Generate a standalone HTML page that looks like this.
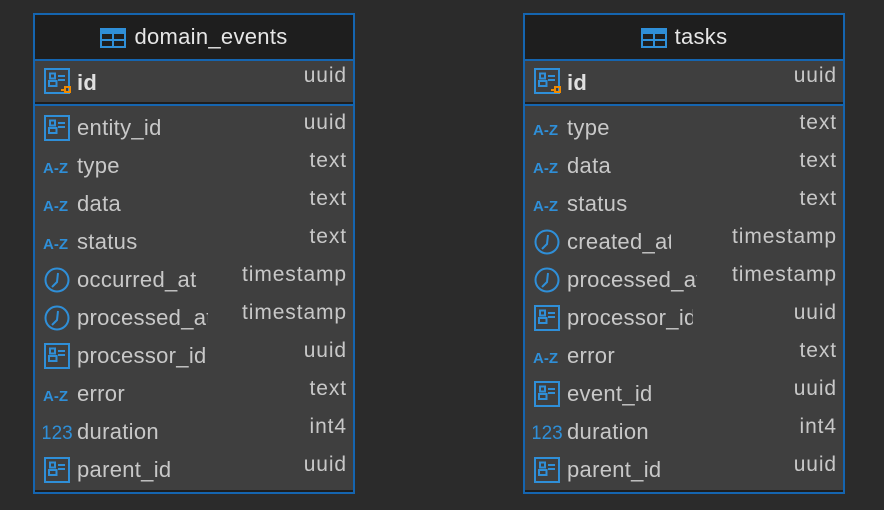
<!DOCTYPE html>
<html><head><style>
body{margin:0;width:884px;height:510px;background:#2b2b2b;overflow:hidden;font-family:"Liberation Sans",sans-serif;position:relative}
.t{position:absolute;top:13px;width:318px;height:477px;border:2px solid #1565b0;background:#3f3f3f}
.h{position:absolute;left:0;top:0;width:318px;height:44px;background:#1e1e1e;border-bottom:2px solid #1565b0;color:#e6e6e6;font-size:22px;letter-spacing:0.3px;line-height:44px;text-align:center}
.h svg{vertical-align:-4px;margin-right:8px}
.sep{position:absolute;left:0;width:318px;top:87px;height:2px;background:#1e1e1e;border-bottom:2px solid #1565b0}
.bot{position:absolute;left:0;bottom:0;width:318px;height:2px;background:#1e1e1e}
.r{position:absolute;left:0;width:318px;height:38px}
.r svg{position:absolute;left:8px;top:6px}
.n{position:absolute;left:42px;top:7px;font-size:22px;letter-spacing:0.3px;color:#c8c8c8;white-space:nowrap;overflow:hidden;line-height:26px}
.ty{position:absolute;right:6px;top:2px;font-size:21px;letter-spacing:0.9px;color:#c8c8c8;line-height:26px}
.b{font-weight:bold;color:#e0e0e0}
</style></head><body>
<svg width="0" height="0" style="position:absolute">
<defs>
<symbol id="card" viewBox="0 0 26 26"><rect x="1" y="1" width="24" height="24" fill="none" stroke="#2f8fd8" stroke-width="2"/><rect x="6" y="5.5" width="5" height="5" fill="none" stroke="#2f8fd8" stroke-width="2"/><rect x="5" y="13" width="7.5" height="5" fill="none" stroke="#2f8fd8" stroke-width="2"/><rect x="14" y="7" width="7" height="2" fill="#2f8fd8"/><rect x="14" y="11" width="7" height="2" fill="#2f8fd8"/></symbol>
<symbol id="clock" viewBox="0 0 26 26"><circle cx="13" cy="13" r="11.5" fill="none" stroke="#2f8fd8" stroke-width="2"/><path d="M14 6 L13 15 L8 20" fill="none" stroke="#2f8fd8" stroke-width="2"/></symbol>
</defs></svg>

<div class="t" style="left:33px">
<div class="h"><svg width="26" height="20"><rect x="1" y="1" width="24" height="18" fill="none" stroke="#2f8fd8" stroke-width="2"/><rect x="1" y="1" width="24" height="5" fill="#2f8fd8"/><rect x="12" y="1" width="2" height="18" fill="#2f8fd8"/><rect x="1" y="11" width="24" height="2" fill="#2f8fd8"/></svg>domain_events</div>
<div class="r" style="top:46px"><svg width="28" height="30"><use href="#card" width="26" height="26" x="1" y="1"/><path d="M18 23h4" stroke="#f08a00" stroke-width="2"/><rect x="22" y="20" width="5" height="5" fill="none" stroke="#f08a00" stroke-width="2"/></svg><div class="n b" style="top:9px">id</div><div class="ty">uuid</div></div>
<div class="sep"></div>
<div class="r" style="top:93px"><svg width="28" height="28"><use href="#card" width="26" height="26" x="1" y="1"/></svg><div class="n">entity_id</div><div class="ty">uuid</div></div>
<div class="r" style="top:131px"><svg width="30" height="28"><text x="0" y="21" font-size="15" font-weight="bold" fill="#2f8fd8" font-family="Liberation Sans">A-Z</text></svg><div class="n">type</div><div class="ty">text</div></div>
<div class="r" style="top:169px"><svg width="30" height="28"><text x="0" y="21" font-size="15" font-weight="bold" fill="#2f8fd8" font-family="Liberation Sans">A-Z</text></svg><div class="n">data</div><div class="ty">text</div></div>
<div class="r" style="top:207px"><svg width="30" height="28"><text x="0" y="21" font-size="15" font-weight="bold" fill="#2f8fd8" font-family="Liberation Sans">A-Z</text></svg><div class="n">status</div><div class="ty">text</div></div>
<div class="r" style="top:245px"><svg width="28" height="28"><use href="#clock" width="26" height="26" x="1" y="1"/></svg><div class="n" style="width:121px">occurred_at</div><div class="ty">timestamp</div></div>
<div class="r" style="top:283px"><svg width="28" height="28"><use href="#clock" width="26" height="26" x="1" y="1"/></svg><div class="n" style="width:131px">processed_at</div><div class="ty">timestamp</div></div>
<div class="r" style="top:321px"><svg width="28" height="28"><use href="#card" width="26" height="26" x="1" y="1"/></svg><div class="n" style="width:131px">processor_id</div><div class="ty">uuid</div></div>
<div class="r" style="top:359px"><svg width="30" height="28"><text x="0" y="21" font-size="15" font-weight="bold" fill="#2f8fd8" font-family="Liberation Sans">A-Z</text></svg><div class="n">error</div><div class="ty">text</div></div>
<div class="r" style="top:397px"><svg width="32" height="28"><text x="-2" y="21" font-size="19" fill="#2f8fd8" font-family="Liberation Sans">123</text></svg><div class="n">duration</div><div class="ty">int4</div></div>
<div class="r" style="top:435px"><svg width="28" height="28"><use href="#card" width="26" height="26" x="1" y="1"/></svg><div class="n" style="width:95px">parent_id</div><div class="ty">uuid</div></div>
<div class="bot"></div>
</div>

<div class="t" style="left:523px">
<div class="h"><svg width="26" height="20"><rect x="1" y="1" width="24" height="18" fill="none" stroke="#2f8fd8" stroke-width="2"/><rect x="1" y="1" width="24" height="5" fill="#2f8fd8"/><rect x="12" y="1" width="2" height="18" fill="#2f8fd8"/><rect x="1" y="11" width="24" height="2" fill="#2f8fd8"/></svg>tasks</div>
<div class="r" style="top:46px"><svg width="28" height="30"><use href="#card" width="26" height="26" x="1" y="1"/><path d="M18 23h4" stroke="#f08a00" stroke-width="2"/><rect x="22" y="20" width="5" height="5" fill="none" stroke="#f08a00" stroke-width="2"/></svg><div class="n b" style="top:9px">id</div><div class="ty">uuid</div></div>
<div class="sep"></div>
<div class="r" style="top:93px"><svg width="30" height="28"><text x="0" y="21" font-size="15" font-weight="bold" fill="#2f8fd8" font-family="Liberation Sans">A-Z</text></svg><div class="n">type</div><div class="ty">text</div></div>
<div class="r" style="top:131px"><svg width="30" height="28"><text x="0" y="21" font-size="15" font-weight="bold" fill="#2f8fd8" font-family="Liberation Sans">A-Z</text></svg><div class="n">data</div><div class="ty">text</div></div>
<div class="r" style="top:169px"><svg width="30" height="28"><text x="0" y="21" font-size="15" font-weight="bold" fill="#2f8fd8" font-family="Liberation Sans">A-Z</text></svg><div class="n" style="width:61px">status</div><div class="ty">text</div></div>
<div class="r" style="top:207px"><svg width="28" height="28"><use href="#clock" width="26" height="26" x="1" y="1"/></svg><div class="n" style="width:104px">created_at</div><div class="ty">timestamp</div></div>
<div class="r" style="top:245px"><svg width="28" height="28"><use href="#clock" width="26" height="26" x="1" y="1"/></svg><div class="n" style="width:130px">processed_at</div><div class="ty">timestamp</div></div>
<div class="r" style="top:283px"><svg width="28" height="28"><use href="#card" width="26" height="26" x="1" y="1"/></svg><div class="n" style="width:126px">processor_id</div><div class="ty">uuid</div></div>
<div class="r" style="top:321px"><svg width="30" height="28"><text x="0" y="21" font-size="15" font-weight="bold" fill="#2f8fd8" font-family="Liberation Sans">A-Z</text></svg><div class="n">error</div><div class="ty">text</div></div>
<div class="r" style="top:359px"><svg width="28" height="28"><use href="#card" width="26" height="26" x="1" y="1"/></svg><div class="n">event_id</div><div class="ty">uuid</div></div>
<div class="r" style="top:397px"><svg width="32" height="28"><text x="-2" y="21" font-size="19" fill="#2f8fd8" font-family="Liberation Sans">123</text></svg><div class="n">duration</div><div class="ty">int4</div></div>
<div class="r" style="top:435px"><svg width="28" height="28"><use href="#card" width="26" height="26" x="1" y="1"/></svg><div class="n" style="width:95px">parent_id</div><div class="ty">uuid</div></div>
<div class="bot"></div>
</div>
</body></html>
